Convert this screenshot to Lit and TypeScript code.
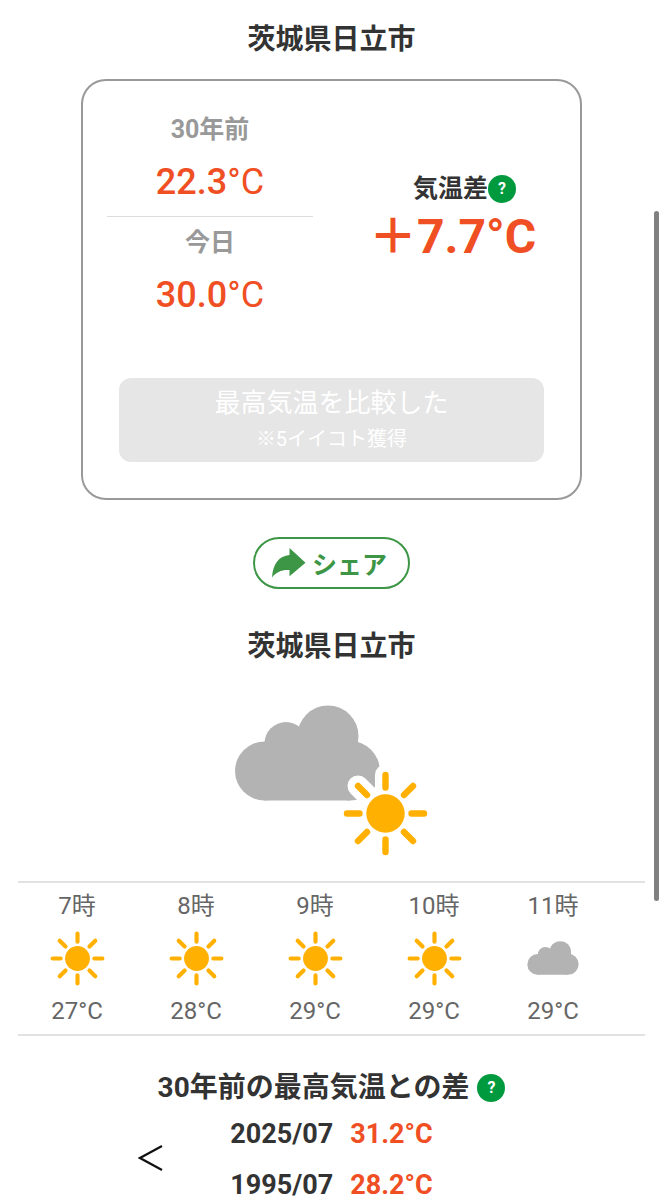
import { LitElement, html, svg, css } from "lit";
import { customElement } from "lit/decorators.js";

interface Hour {
  hour: string;
  icon: "sun" | "cloud";
  temp: string;
}

const HOURS: Hour[] = [
  { hour: "7時", icon: "sun", temp: "27°C" },
  { hour: "8時", icon: "sun", temp: "28°C" },
  { hour: "9時", icon: "sun", temp: "29°C" },
  { hour: "10時", icon: "sun", temp: "29°C" },
  { hour: "11時", icon: "cloud", temp: "29°C" },
];

const RECORDS = [
  { month: "2025/07", temp: "31.2°C" },
  { month: "1995/07", temp: "28.2°C" },
];

// Eight rays around the origin, on the same scale as the 19-unit sun disc.
const RAYS =
  "M0-38.5V-26M0 26V38.5M-38.5 0H-26M26 0H38.5M-27.5-27.5L-18.5-18.5M18.5 18.5L27.5 27.5M-27.5 27.5L-18.5 18.5M18.5-18.5L27.5-27.5";

const sunShape = svg`
  <path d=${RAYS} fill="none" stroke="#ffb000" stroke-width="6.4" stroke-linecap="round"></path>
  <circle r="19.2" fill="#ffb000"></circle>`;

const cloudShape = svg`
  <g fill="#b3b3b3">
    <circle cx="29.5" cy="66" r="29.5"></circle>
    <circle cx="51" cy="38.5" r="21.5"></circle>
    <circle cx="93" cy="31" r="30.5"></circle>
    <circle cx="115" cy="65.7" r="29.8"></circle>
    <path d="M29.5 36.5H60L93 20L123.5 37L115 95.5H29.5Z"></path>
  </g>`;

@customElement("weather-icon")
class WeatherIcon extends LitElement {
  static properties = { name: {} };
  declare name: string;

  static styles = css`
    :host { display: flex; justify-content: center; align-items: center; }
    svg { display: block; }
  `;

  render() {
    if (this.name === "sun") {
      return html`<svg width="55" height="55" viewBox="-42.5 -42.5 85 85" role="img" aria-label="晴れ">${sunShape}</svg>`;
    }
    if (this.name === "cloud") {
      return html`<svg width="52" height="34" viewBox="0 0 145 96" role="img" aria-label="くもり">${cloudShape}</svg>`;
    }
    return html`
      <svg width="194" height="152" viewBox="0 0 194 152" role="img" aria-label="くもり時々晴れ">
        ${cloudShape}
        <g transform="translate(150.5 108.5)">
          <path d=${RAYS} fill="none" stroke="#fff" stroke-width="21" stroke-linecap="round"></path>
          ${sunShape}
        </g>
      </svg>`;
  }
}

@customElement("help-button")
class HelpButton extends LitElement {
  static styles = css`
    :host { display: inline-flex; }
    .help {
      width: 28px;
      height: 28px;
      padding: 0;
      border: 0;
      border-radius: 50%;
      background: #009a3e;
      color: #fff;
      font: 700 16px/28px Roboto, sans-serif;
      text-align: center;
    }
  `;

  render() {
    return html`<button class="help" type="button" aria-label="説明">?</button>`;
  }
}

@customElement("app-root")
class AppRoot extends LitElement {
  static styles = css`
    :host {
      display: block;
      position: relative;
      height: 100vh;
      overflow: hidden;
      background: #fff;
      color: #333;
      font-family: Roboto, "Noto Sans CJK JP", sans-serif;
    }
    .page { padding: 20px 18px 0; }
    .title {
      margin: 0;
      font-size: 28px;
      line-height: 40px;
      font-weight: 700;
      text-align: center;
    }
    .card {
      box-sizing: border-box;
      max-width: 501px;
      margin: 19px auto 0;
      padding: 33px 24px 36px;
      border: 2px solid #999;
      border-radius: 25px;
    }
    .compare {
      display: grid;
      grid-template-columns: 206px 1fr;
      gap: 36px;
      align-items: center;
      text-align: center;
    }
    .past { padding-bottom: 10px; border-bottom: 1px solid #ddd; }
    .today { padding-top: 10px; }
    .label {
      margin: 0 0 12px;
      font-size: 25px;
      line-height: 32px;
      font-weight: 700;
      color: #999;
    }
    .value {
      margin: 0;
      font-size: 36px;
      line-height: 48px;
      font-weight: 500;
      color: #f04e23;
    }
    .unit { font-weight: 400; }
    .diff { padding-top: 4px; }
    .diff-label {
      display: flex;
      justify-content: center;
      align-items: center;
      margin: 0;
      padding-left: 24px;
      font-size: 25px;
      line-height: 36px;
      font-weight: 700;
    }
    .diff-value {
      margin: 0;
      font-size: 48px;
      line-height: 60px;
      font-weight: 700;
      color: #f04e23;
      white-space: nowrap;
    }
    .claim {
      display: flex;
      flex-direction: column;
      align-items: center;
      justify-content: center;
      box-sizing: border-box;
      width: calc(100% - 24px);
      height: 84px;
      margin: 59px 12px 0;
      padding: 2px 0 0;
      border: 0;
      border-radius: 12px;
      background: #e6e6e6;
      color: #fff;
      font-family: inherit;
      font-size: 26px;
      line-height: 36px;
    }
    .claim-note { font-size: 20px; }
    .share {
      display: flex;
      align-items: center;
      justify-content: center;
      gap: 6px;
      box-sizing: border-box;
      width: 157px;
      height: 52px;
      margin: 37px auto 38px;
      padding: 0 4px 0 0;
      border: 2px solid #3d9645;
      border-radius: 26px;
      background: #fff;
      color: #3d9645;
      font: 700 25px/32px "Noto Sans CJK JP", sans-serif;
    }
    .current { margin: 38px 0 24px; }
    .hours {
      display: flex;
      margin: 0;
      padding: 0;
      list-style: none;
      overflow: hidden;
      border-top: 2px solid #e2e2e2;
      border-bottom: 2px solid #e2e2e2;
      color: #666;
      font-size: 24px;
      line-height: 32px;
      text-align: center;
    }
    .hour { flex: 0 0 118px; padding: 7px 0; }
    .hour + .hour { margin-left: 1px; }
    .hour-icon { height: 54px; margin: 9px 0 10px; }
    .history-title {
      display: flex;
      justify-content: center;
      align-items: center;
      gap: 8px;
      margin: 32px 0 0;
      font-size: 28px;
      line-height: 40px;
      font-weight: 700;
    }
    .history {
      display: grid;
      grid-template-columns: 1fr auto 1fr;
      align-items: start;
      column-gap: 67px;
      margin-top: 1px;
    }
    .prev {
      justify-self: end;
      margin-top: 35px;
      padding: 0;
      border: 0;
      background: none;
      color: #111;
    }
    .prev svg, .share svg { display: block; }
    .records {
      border-collapse: collapse;
      font-size: 27px;
      line-height: 51px;
      font-weight: 700;
    }
    .records th, .records td { padding: 0; font-weight: inherit; text-align: left; }
    .records td { padding-left: 17px; color: #f04e23; }
    .scrollbar {
      position: absolute;
      top: 211px;
      right: 4px;
      width: 5px;
      height: 690px;
      border-radius: 3px;
      background: #808080;
    }
  `;

  render() {
    return html`
      <main class="page">
        <h2 class="title">茨城県日立市</h2>
        <section class="card">
          <div class="compare">
            <div>
              <div class="past">
                <p class="label">30年前</p>
                <p class="value">22.3<span class="unit">°C</span></p>
              </div>
              <div class="today">
                <p class="label">今日</p>
                <p class="value">30.0<span class="unit">°C</span></p>
              </div>
            </div>
            <div class="diff">
              <p class="diff-label">気温差<help-button></help-button></p>
              <p class="diff-value">＋7.7°C</p>
            </div>
          </div>
          <button class="claim" type="button" disabled>
            <span>最高気温を比較した</span>
            <span class="claim-note">※5イイコト獲得</span>
          </button>
        </section>

        <button class="share" type="button">
          <svg width="34" height="30" viewBox="0 0 34 30" aria-hidden="true">
            <path fill="currentColor" d="M17.5 0L33.5 14.7L17.5 28.3V22C10 21.5 4 24 0 29.5C1 15.5 7 8 17.5 7Z"></path>
          </svg>
          シェア
        </button>

        <h2 class="title">茨城県日立市</h2>
        <weather-icon class="current" name="mixed"></weather-icon>

        <ul class="hours">
          ${HOURS.map(
            (h) => html`
              <li class="hour">
                <div>${h.hour}</div>
                <weather-icon class="hour-icon" name=${h.icon}></weather-icon>
                <div>${h.temp}</div>
              </li>`
          )}
        </ul>

        <h3 class="history-title">30年前の最高気温との差<help-button></help-button></h3>
        <div class="history">
          <button class="prev" type="button" aria-label="前の月">
            <svg width="25" height="28" viewBox="0 0 25 28" aria-hidden="true">
              <path d="M24 2L2 14L24 26" fill="none" stroke="currentColor" stroke-width="2.2"></path>
            </svg>
          </button>
          <table class="records">
            <tbody>
              ${RECORDS.map((r) => html`<tr><th scope="row">${r.month}</th><td>${r.temp}</td></tr>`)}
            </tbody>
          </table>
        </div>
      </main>
      <div class="scrollbar" aria-hidden="true"></div>
    `;
  }
}
